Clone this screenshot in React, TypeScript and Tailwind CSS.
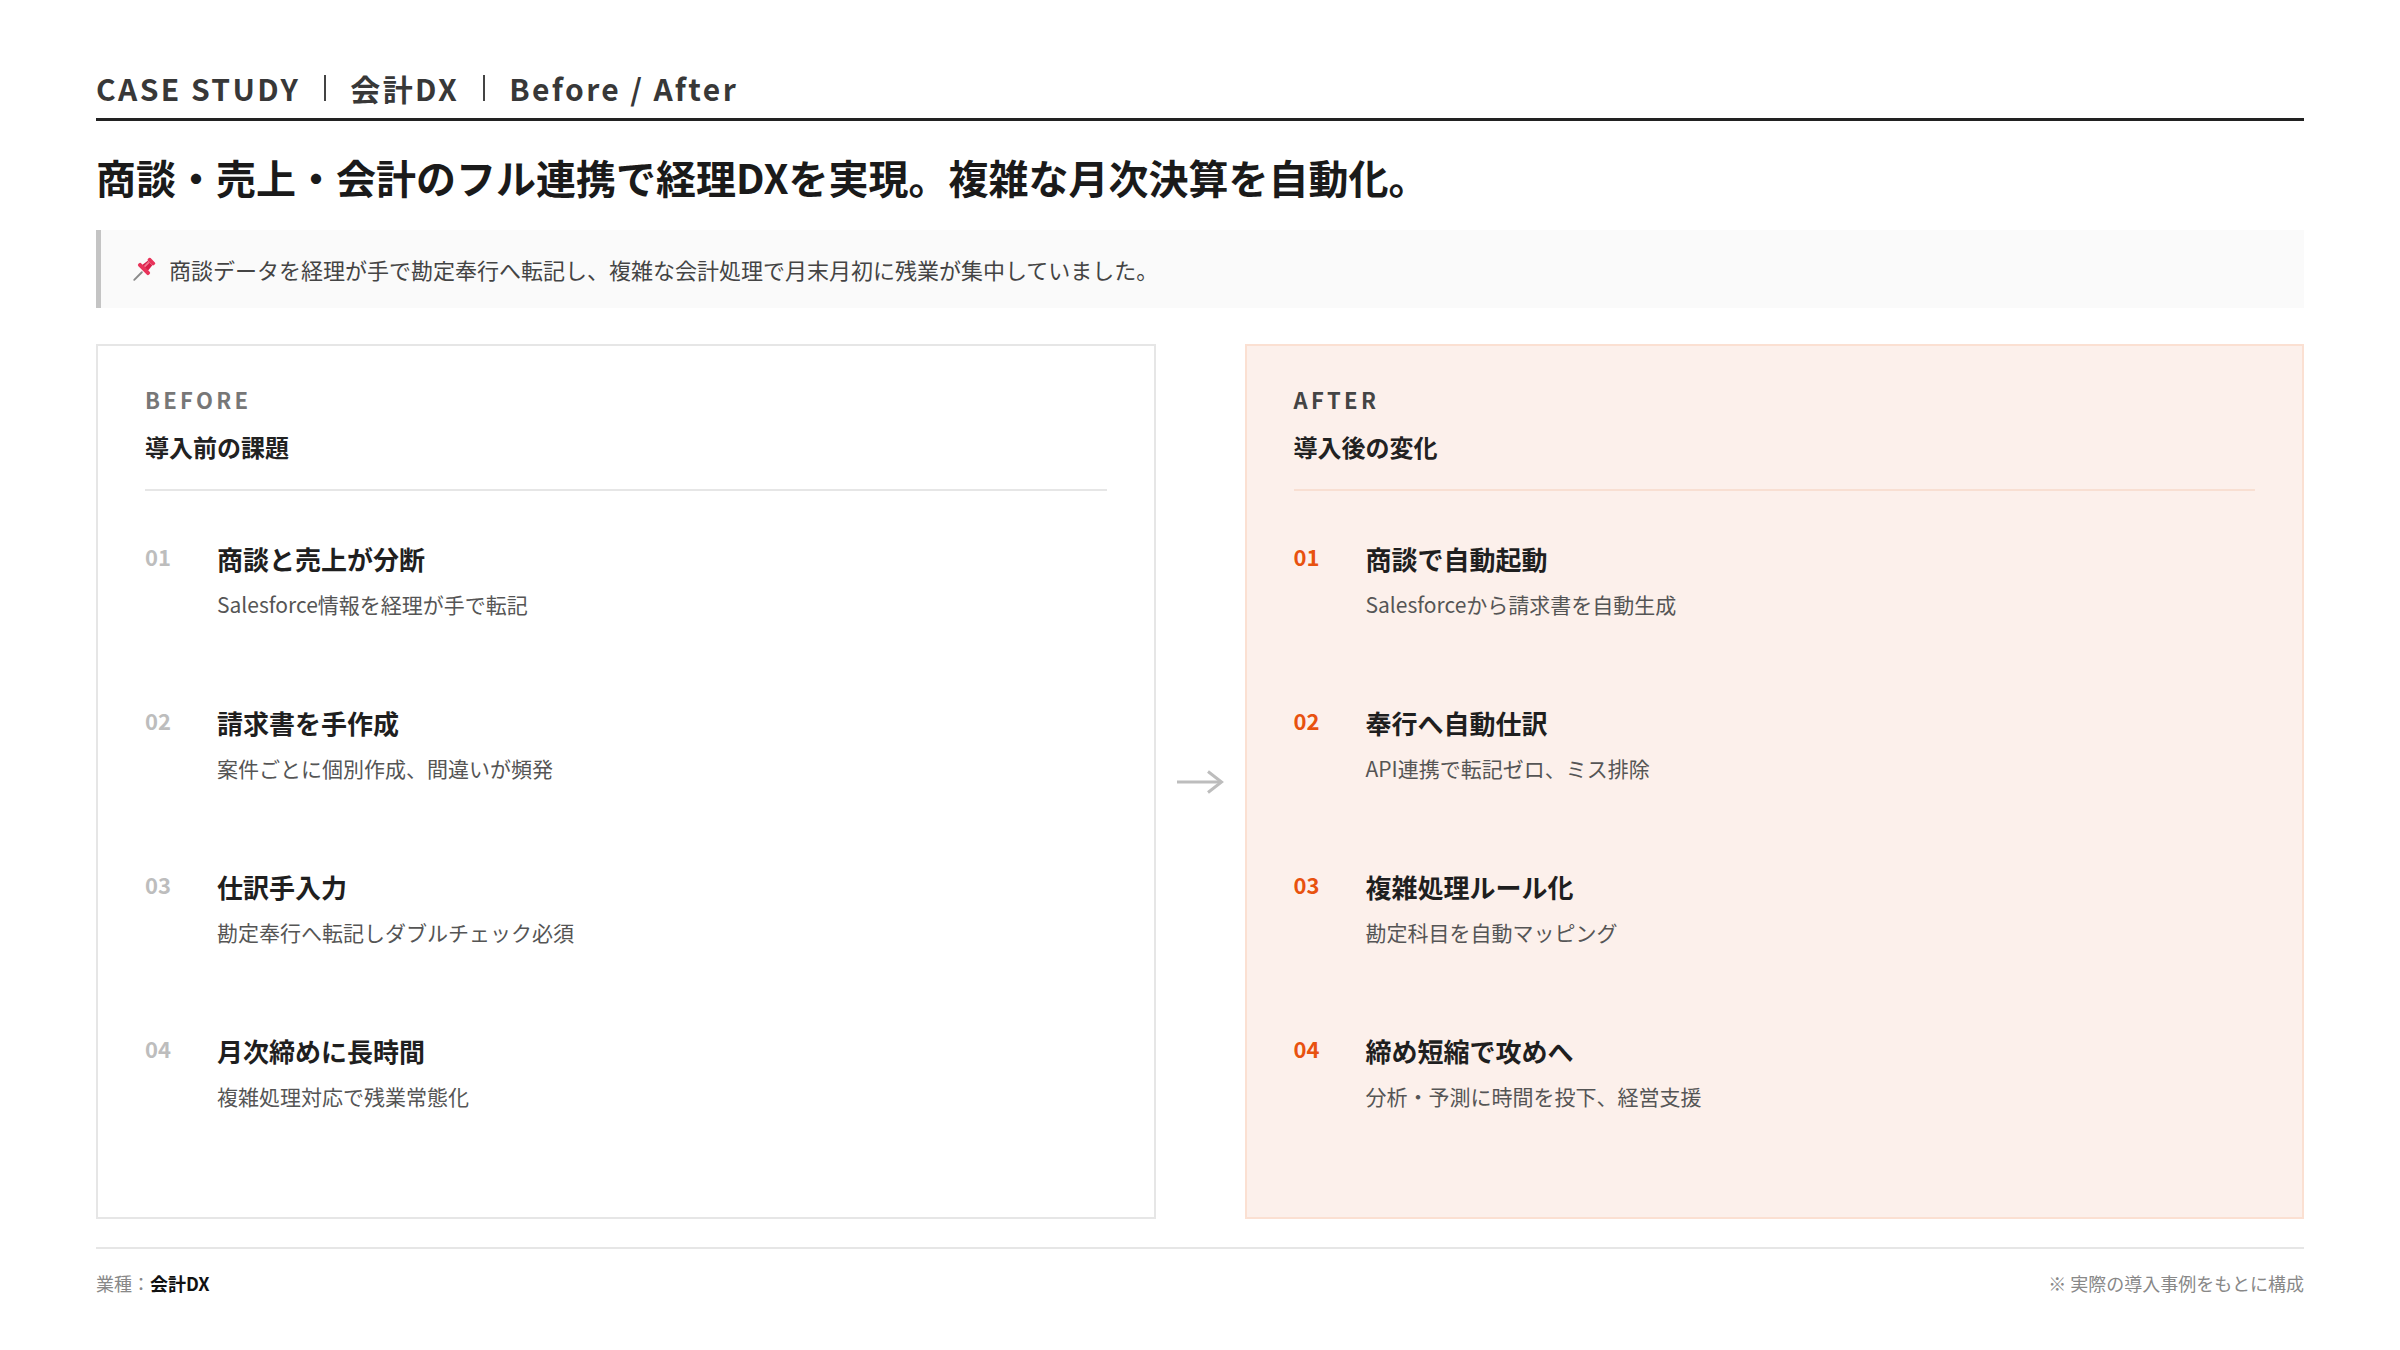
const beforeItems = [
  { no: "01", title: "商談と売上が分断", desc: "Salesforce情報を経理が手で転記" },
  { no: "02", title: "請求書を手作成", desc: "案件ごとに個別作成、間違いが頻発" },
  { no: "03", title: "仕訳手入力", desc: "勘定奉行へ転記しダブルチェック必須" },
  { no: "04", title: "月次締めに長時間", desc: "複雑処理対応で残業常態化" },
];

const afterItems = [
  { no: "01", title: "商談で自動起動", desc: "Salesforceから請求書を自動生成" },
  { no: "02", title: "奉行へ自動仕訳", desc: "API連携で転記ゼロ、ミス排除" },
  { no: "03", title: "複雑処理ルール化", desc: "勘定科目を自動マッピング" },
  { no: "04", title: "締め短縮で攻めへ", desc: "分析・予測に時間を投下、経営支援" },
];

type Item = { no: string; title: string; desc: string };

function PinIcon() {
  return (
    <svg width="26" height="26" viewBox="0 0 24 24" aria-hidden>
      <line x1="3" y1="22" x2="10" y2="15" stroke="#8a8a8a" strokeWidth="1.8" strokeLinecap="round" />
      <g transform="rotate(45 13 11)">
        <rect x="9" y="1" width="8" height="3.5" rx="1.2" fill="#e8335a" />
        <path d="M10 4.5 H16 L16.8 11 H9.2 Z" fill="#d81f4a" />
        <rect x="6" y="10.5" width="14" height="3.8" rx="1.6" fill="#e8335a" />
        <rect x="11" y="5" width="1.6" height="5.5" fill="#f47a94" />
      </g>
    </svg>
  );
}

function ArrowIcon() {
  return (
    <svg width="48" height="24" viewBox="0 0 48 24" aria-hidden>
      <line x1="1" y1="12" x2="45" y2="12" stroke="#bdbdbd" strokeWidth="3" />
      <path d="M32 1.5 L45.5 12 L32 22.5" fill="none" stroke="#bdbdbd" strokeWidth="3" />
    </svg>
  );
}

function ItemList({ items, after }: { items: Item[]; after: boolean }) {
  return (
    <ul className="mt-[50px] flex flex-col gap-[86px]">
      {items.map((item) => (
        <li key={item.no} className="flex items-start">
          <span
            className={
              after
                ? "w-[72px] shrink-0 text-[22px] font-bold leading-[30px] text-[#e8520f]"
                : "w-[72px] shrink-0 text-[22px] font-bold leading-[30px] text-[#bdbdbd]"
            }
          >
            {item.no}
          </span>
          <div>
            <div className="text-[26px] font-bold leading-[36px] text-[#1f1f1f]">{item.title}</div>
            <div className="mt-[12px] text-[21px] leading-[30px] text-[#555]">{item.desc}</div>
          </div>
        </li>
      ))}
    </ul>
  );
}

export default function App() {
  return (
    <div
      className="h-[1350px] w-full bg-white px-[96px] pt-[70px]"
      style={{ fontFamily: '"Noto Sans CJK JP", "Noto Sans", sans-serif' }}
    >
      <header className="flex items-center border-b-[3px] border-[#222] pb-[12px] text-[30px] font-bold leading-[36px] tracking-[0.08em] text-[#383838]">
        <span>CASE STUDY</span>
        <span className="mx-[24px] inline-block h-[26px] w-[2px] bg-[#444]" />
        <span>会計DX</span>
        <span className="mx-[24px] inline-block h-[26px] w-[2px] bg-[#444]" />
        <span>Before / After</span>
      </header>

      <h1 className="mt-[28px] text-[40px] font-bold leading-[56px] text-[#1a1a1a]">
        商談・売上・会計のフル連携で経理DXを実現。複雑な月次決算を自動化。
      </h1>

      <div className="mt-[25px] flex h-[78px] items-center gap-[12px] border-l-[5px] border-[#c4c4c4] bg-[#fafafa] pl-[30px]">
        <PinIcon />
        <p className="text-[22px] leading-[30px] text-[#444]">
          商談データを経理が手で勘定奉行へ転記し、複雑な会計処理で月末月初に残業が集中していました。
        </p>
      </div>

      <div className="mt-[36px] grid grid-cols-[1fr_89px_1fr]">
        <section className="border-2 border-[#e6e6e6] bg-white px-[47px] pb-[106px] pt-[39px]">
          <div className="border-b-2 border-[#e6e6e6] pb-[25px]">
            <div className="text-[22px] font-bold leading-[28px] tracking-[0.15em] text-[#777]">BEFORE</div>
            <h2 className="mt-[17px] text-[24px] font-bold leading-[34px] text-[#222]">導入前の課題</h2>
          </div>
          <ItemList items={beforeItems} after={false} />
        </section>

        <div className="flex items-center justify-center">
          <ArrowIcon />
        </div>

        <section className="border-2 border-[#fbe0d2] bg-[#fcf0eb] px-[47px] pb-[106px] pt-[39px]">
          <div className="border-b-2 border-[#f8dfd2] pb-[25px]">
            <div className="text-[22px] font-bold leading-[28px] tracking-[0.15em] text-[#444]">AFTER</div>
            <h2 className="mt-[17px] text-[24px] font-bold leading-[34px] text-[#222]">導入後の変化</h2>
          </div>
          <ItemList items={afterItems} after={true} />
        </section>
      </div>

      <footer className="mt-[28px] flex items-center justify-between border-t-2 border-[#e6e6e6] pt-[21px] text-[18px] leading-[26px] text-[#888]">
        <div>
          業種：<span className="font-bold text-[#111]">会計DX</span>
        </div>
        <div>※ 実際の導入事例をもとに構成</div>
      </footer>
    </div>
  );
}
